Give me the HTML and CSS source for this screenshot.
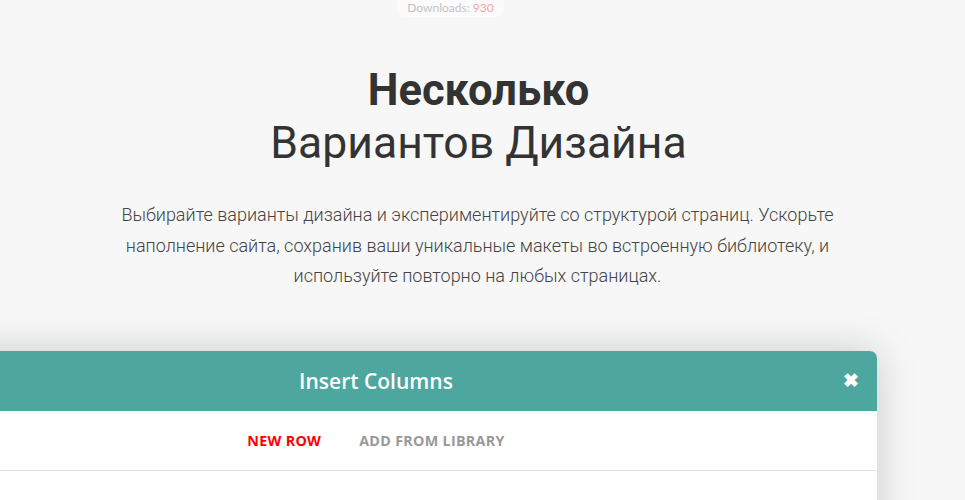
FILE: index.html
```html
<!DOCTYPE html>
<html>
<head>
<meta charset="utf-8">
<link rel="stylesheet" href="styles.css">
</head>
<body>
<div class="page">
  <div class="badge-row"><span class="badge">Downloads: <span class="count">930</span></span></div>
  <h1 class="title"><strong>Несколько</strong><span class="sub">Вариантов Дизайна</span></h1>
  <p class="lead">Выбирайте варианты дизайна и экспериментируйте со структурой страниц. Ускорьте наполнение сайта, сохранив ваши уникальные макеты во встроенную библиотеку, и используйте повторно на любых страницах.</p>
  <div class="modal">
    <div class="modal-head">
      <span class="modal-title">Insert Columns</span>
      <span class="close">&#10006;</span>
    </div>
    <div class="tabs">
      <span class="tab active">New Row</span>
      <span class="tab">Add from Library</span>
    </div>
    <div class="modal-body"></div>
  </div>
</div>
</body>
</html>
```
FILE: styles.css
```css
html, body { margin: 0; padding: 0; overflow: hidden; height: 500px; }
body { background: #f7f7f7; font-family: Roboto, "Noto Sans", sans-serif; color: #333; }
.page { display: flex; flex-direction: column; align-items: center; height: 500px; overflow: hidden; }
.badge-row { display: flex; justify-content: center; margin-right: 64px; }
.badge { background: #fbfbfb; border-radius: 0 0 8px 8px; padding: 0 10px 2px; font-family: Lato, sans-serif; font-size: 12px; line-height: 15px; color: #c4c4c4; }
.count { color: #f5a3ab; }
.title { margin: 51px 0 0; text-align: center; font-weight: 400; color: #333; padding-right: 8px; }
.title strong { display: block; font-weight: 700; font-size: 43.5px; line-height: 46px; }
.sub { display: block; font-size: 44.5px; line-height: 58px; }
.lead { margin: 28px 10px 0 0; width: 760px; text-align: center; font-weight: 300; font-size: 18px; line-height: 30.5px; color: #444; }
.modal { align-self: flex-start; margin: 59px 0 0 -125px; width: 1002px; height: 200px; background: #fff; border-radius: 0 7px 0 0; box-shadow: 0 0 40px rgba(0,0,0,0.18); overflow: hidden; flex-shrink: 0; }
.modal-head { position: relative; height: 60px; background: #4ea79e; display: flex; align-items: center; justify-content: center; }
.modal-title { font-family: "Open Sans", sans-serif; font-weight: 600; font-size: 21px; color: #fff; }
.close { position: absolute; right: 18px; top: 19px; color: #fff; font-size: 19px; font-weight: 700; line-height: 22px; }
.tabs { display: flex; justify-content: center; gap: 38px; height: 59px; align-items: center; border-bottom: 1px solid #e3e3e3; }
.tab { font-family: "Open Sans", sans-serif; font-weight: 700; font-size: 14.3px; text-transform: uppercase; color: #999; letter-spacing: 0.3px; }
.tab.active { color: #ff0000; }
```
